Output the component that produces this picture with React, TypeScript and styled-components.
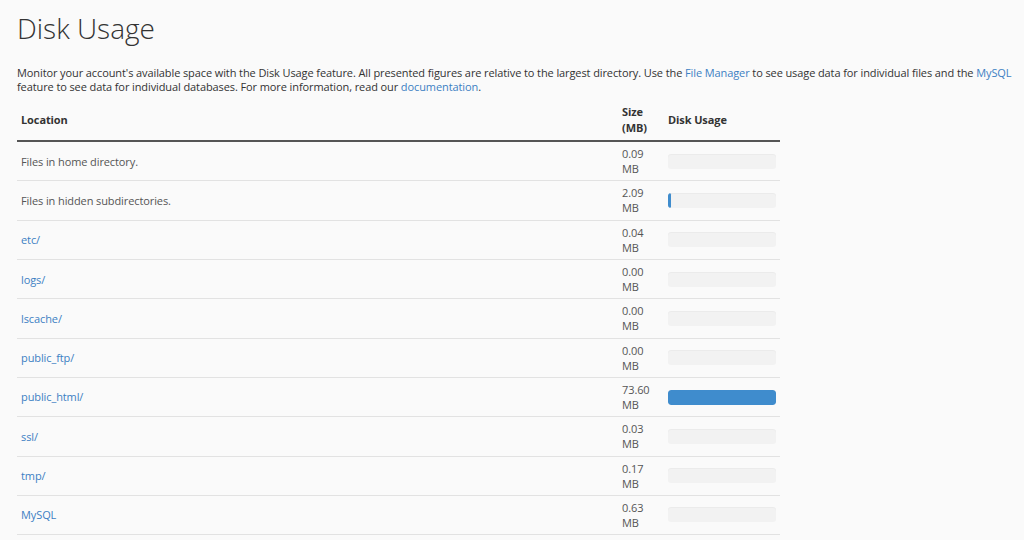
import React from "react";
import styled, { createGlobalStyle } from "styled-components";

const Global = createGlobalStyle`
  html, body { margin: 0; padding: 0; background: #fafafa; }
  body { font-family: "Open Sans", "Liberation Sans", sans-serif; color: #333; }
`;

const Page = styled.div`
  padding: 0 8px 0 17px;
`;

const Title = styled.h1`
  font-size: 28px;
  font-weight: 300;
  color: #333;
  margin: 9px 0 0 0;
  line-height: 38px;
`;

const Intro = styled.p`
  font-size: 11px;
  line-height: 14px;
  letter-spacing: -0.1px;
  margin: 19px 0 6px 0;
  color: #333;
`;

const Link = styled.a`
  color: #3c80c3;
  text-decoration: none;
`;

const Table = styled.table`
  width: 763px;
  border-collapse: collapse;
  font-size: 11px;
  letter-spacing: -0.1px;
`;

const Th = styled.th<{ $w?: number }>`
  text-align: left;
  font-weight: 700;
  padding: 4px 4px;
  line-height: 16px;
  border-bottom: 2px solid #555;
  vertical-align: middle;
  ${(p) => (p.$w ? `width: ${p.$w}px;` : "")}
`;

const Td = styled.td`
  padding: 4px 4px;
  line-height: 15.15px;
  border-bottom: 1px solid #e2e2e2;
  vertical-align: middle;
  color: #555;
`;

const Track = styled.div`
  height: 15px;
  background: #f2f2f2;
  border-radius: 3px;
  overflow: hidden;
  box-shadow: inset 0 1px 1px rgba(0, 0, 0, 0.03);
`;

const Fill = styled.div`
  height: 100%;
  background: #3f8ccd;
  border-radius: 3px;
`;

const rows: { name: string; link: boolean; size: number }[] = [
  { name: "Files in home directory.", link: false, size: 0.09 },
  { name: "Files in hidden subdirectories.", link: false, size: 2.09 },
  { name: "etc/", link: true, size: 0.04 },
  { name: "logs/", link: true, size: 0.0 },
  { name: "lscache/", link: true, size: 0.0 },
  { name: "public_ftp/", link: true, size: 0.0 },
  { name: "public_html/", link: true, size: 73.6 },
  { name: "ssl/", link: true, size: 0.03 },
  { name: "tmp/", link: true, size: 0.17 },
  { name: "MySQL", link: true, size: 0.63 },
];

const max = 73.6;

export default function App() {
  return (
    <Page>
      <Global />
      <Title>Disk Usage</Title>
      <Intro>
        Monitor your account's available space with the Disk Usage feature. All presented figures are
        relative to the largest directory. Use the <Link href="#">File Manager</Link> to see usage data for
        individual files and the <Link href="#">MySQL</Link> feature to see data for individual databases.
        For more information, read our <Link href="#">documentation</Link>.
      </Intro>
      <Table>
        <thead>
          <tr>
            <Th>Location</Th>
            <Th $w={38}>Size (MB)</Th>
            <Th $w={108}>Disk Usage</Th>
          </tr>
        </thead>
        <tbody>
          {rows.map((r) => {
            const pct = (r.size / max) * 100;
            return (
              <tr key={r.name}>
                <Td>{r.link ? <Link href="#">{r.name}</Link> : r.name}</Td>
                <Td>
                  {r.size.toFixed(2)}
                  <br />
                  MB
                </Td>
                <Td>
                  <Track>
                    {pct >= 1 && <Fill style={{ width: `${Math.max(pct, 3)}%` }} />}
                  </Track>
                </Td>
              </tr>
            );
          })}
        </tbody>
      </Table>
    </Page>
  );
}
